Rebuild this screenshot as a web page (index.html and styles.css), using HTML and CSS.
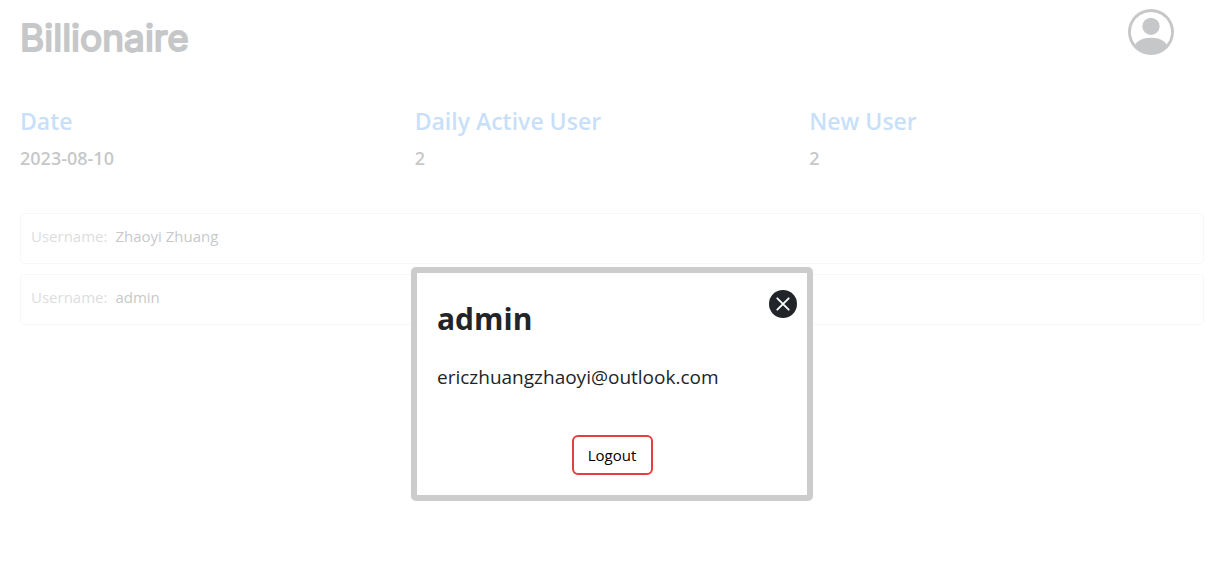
FILE: index.html
```html
<!DOCTYPE html>
<html lang="en">
<head>
<meta charset="utf-8">
<meta name="viewport" content="width=device-width, initial-scale=1">
<title>Billionaire</title>
<link rel="stylesheet" href="styles.css">
</head>
<body>
<div class="page">
  <header class="header">
    <h1 class="brand"><svg class="brand-mark" viewBox="0 0 190 52"><text class="brand-text" x="0" y="42">Billionaire</text></svg></h1>
    <button class="profile" type="button" aria-label="Profile">
      <svg viewBox="0 0 16 16" fill="currentColor" aria-hidden="true"><path d="M11 6a3 3 0 1 1-6 0 3 3 0 0 1 6 0"/><path fill-rule="evenodd" d="M0 8a8 8 0 1 1 16 0A8 8 0 0 1 0 8m8-7a7 7 0 0 0-5.468 11.37C3.242 11.226 4.805 10 8 10s4.757 1.225 5.468 2.37A7 7 0 0 0 8 1"/></svg>
    </button>
  </header>
  <main>
    <section class="stats">
      <div><h2 class="stat-title">Date</h2><p class="stat-value">2023-08-10</p></div>
      <div><h2 class="stat-title">Daily Active User</h2><p class="stat-value">2</p></div>
      <div><h2 class="stat-title">New User</h2><p class="stat-value">2</p></div>
    </section>
    <ul class="users">
      <li class="user"><span class="user-label">Username:</span><span>Zhaoyi Zhuang</span></li>
      <li class="user"><span class="user-label">Username:</span><span>admin</span></li>
    </ul>
  </main>
</div>
<div class="modal" role="dialog" aria-modal="true" aria-labelledby="modal-name">
  <div class="modal-head">
    <h2 class="modal-name" id="modal-name">admin</h2>
    <button class="close" type="button" aria-label="Close">
      <svg viewBox="0 0 28 28" aria-hidden="true"><circle cx="14" cy="14" r="14" fill="#212529"/><path d="M8.3 8.3l11.4 11.4M19.7 8.3L8.3 19.7" stroke="#fff" stroke-width="1.8" stroke-linecap="round"/></svg>
    </button>
  </div>
  <p class="modal-email">ericzhuangzhaoyi@outlook.com</p>
  <button class="logout" type="button">Logout</button>
</div>
</body>
</html>
```
FILE: styles.css
```css
* {
  box-sizing: border-box;
}

body {
  margin: 0;
  background: #fff;
  color: #212529;
  font-family: "Open Sans", "Noto Sans", sans-serif;
  font-size: 16px;
  line-height: 24px;
}

h1,
h2,
p,
ul {
  margin: 0;
  padding: 0;
}

button {
  font: inherit;
  color: inherit;
  padding: 0;
  border: 0;
  background: none;
  cursor: pointer;
}

svg {
  display: block;
  width: 100%;
  height: 100%;
}

.page {
  padding: 9px 10px 0 20px;
  opacity: 0.25;
}

.header {
  display: flex;
  justify-content: space-between;
  padding-right: 30px;
}

.brand {
  width: 190px;
  height: 52px;
}

.brand-mark {
  overflow: visible;
}

.brand-text {
  font-family: Inter, sans-serif;
  font-size: 37px;
  font-weight: 400;
  fill: #212529;
  stroke: #212529;
  stroke-width: 2px;
  stroke-linejoin: round;
}

.profile {
  width: 46px;
  height: 46px;
}

.stats {
  display: grid;
  grid-template-columns: repeat(3, 1fr);
  padding-top: 44px;
}

.stat-title {
  color: #2383e7;
  font-size: 23px;
  font-weight: 600;
  line-height: 32px;
}

.stat-value {
  padding-top: 9px;
  font-size: 18px;
  font-weight: 600;
}

.users {
  display: grid;
  gap: 10px;
  padding-top: 43px;
  list-style: none;
}

.user {
  display: flex;
  gap: 8px;
  height: 51px;
  padding: 10px;
  border: 1px solid #dee2e6;
  border-radius: 5px;
  font-size: 15px;
}

.user-label {
  color: #777;
}

.modal {
  position: absolute;
  top: 267px;
  left: 20px;
  right: 10px;
  width: 402px;
  max-width: 90%;
  margin: 0 auto;
  padding: 17px 10px 20px;
  border: 6px solid #ccc;
  border-radius: 5px;
  background: #fff;
}

.modal-head {
  display: flex;
  justify-content: space-between;
  padding-left: 10px;
}

.modal-name {
  padding-top: 9px;
  font-size: 30px;
  font-weight: 700;
  line-height: 40px;
}

.close {
  width: 28px;
  height: 28px;
}

.modal-email {
  padding: 23px 0 0 10px;
  font-size: 19px;
  line-height: 30px;
}

.logout {
  display: block;
  margin: 43px auto 0;
  width: 81px;
  height: 40px;
  border: 2px solid #e53e3e;
  border-radius: 6px;
  color: #000;
  font-size: 15px;
}
```
